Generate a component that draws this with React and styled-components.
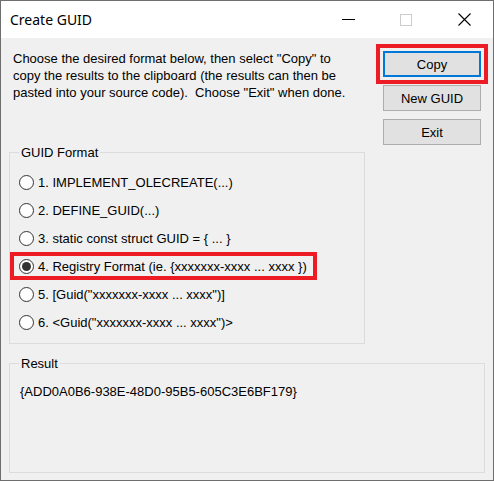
import styled, { createGlobalStyle } from "styled-components";

const GlobalStyle = createGlobalStyle`
  html, body {
    margin: 0;
    padding: 0;
    background: #ffffff;
  }
  body {
    font-family: "Liberation Sans", Arial, sans-serif;
    color: #000;
  }
`;

const Window = styled.div`
  width: 494px;
  height: 481px;
  box-sizing: border-box;
  border: 1px solid #6e6e6e;
  display: flex;
  flex-direction: column;
  background: #f0f0f0;
`;

const TitleBar = styled.div`
  height: 37px;
  flex: none;
  background: #ffffff;
  display: flex;
  align-items: center;
`;

const Title = styled.div`
  flex: 1;
  padding-left: 9px;
  font-family: "Noto Sans", "Open Sans", sans-serif;
  font-size: 14px;
`;

const CaptionButton = styled.div`
  width: 58px;
  height: 37px;
  display: flex;
  align-items: center;
  justify-content: center;
`;

const Client = styled.div`
  flex: 1;
  display: flex;
  flex-direction: column;
  padding: 12px 8px 7px 8px;
  font-size: 13px;
`;

const Top = styled.div`
  display: flex;
  align-items: flex-start;
`;

const LeftColumn = styled.div`
  width: 356px;
  display: flex;
  flex-direction: column;
`;

const Instructions = styled.p`
  margin: 0 0 0 4px;
  max-width: 346px;
  line-height: 17px;
`;

const GroupBox = styled.fieldset`
  margin: ${(p) => p.$top}px 0 0;
  padding: ${(p) => p.$padTop}px 4px ${(p) => p.$padBottom}px;
  border: 1px solid #dcdcdc;
  min-inline-size: 0;
  box-sizing: border-box;
  flex: ${(p) => (p.$grow ? 1 : "none")};
  display: flex;
  flex-direction: column;
  gap: 8px;
`;

const Legend = styled.legend`
  margin-left: 5px;
  padding: 0 2px;
  line-height: 15px;
`;

const Option = styled.label`
  align-self: flex-start;
  height: 20px;
  display: flex;
  align-items: center;
  gap: 4px;
  padding: 0 6px 0 5px;
  outline: ${(p) => (p.$marked ? "4px solid #ed1c24" : "none")};
`;

const Radio = styled.span`
  width: 15px;
  height: 15px;
  box-sizing: border-box;
  border: 1px solid #333333;
  border-radius: 50%;
  background: #ffffff;
  display: flex;
  align-items: center;
  justify-content: center;

  &::after {
    content: "";
    width: 9px;
    height: 9px;
    border-radius: 50%;
    background: #333333;
    display: ${(p) => (p.$checked ? "block" : "none")};
  }
`;

const ButtonColumn = styled.div`
  margin: 1px 4px 0 18px;
  width: 98px;
  display: flex;
  flex-direction: column;
  gap: 8px;
`;

const Button = styled.button`
  height: 26px;
  box-sizing: border-box;
  background: #e1e1e1;
  border: 1px solid ${(p) => (p.$default ? "#0078d7" : "#adadad")};
  box-shadow: ${(p) => (p.$default ? "inset 0 0 0 1px #0078d7" : "none")};
  outline: ${(p) => (p.$marked ? "4px solid #ed1c24" : "none")};
  outline-offset: 3px;
  font-family: inherit;
  font-size: 13px;
  color: #000;
  padding: 0;
`;

const ResultText = styled.div`
  margin-left: 6px;
  line-height: 15px;
`;

const formats = [
  "1. IMPLEMENT_OLECREATE(...)",
  "2. DEFINE_GUID(...)",
  "3. static const struct GUID = { ... }",
  "4. Registry Format (ie. {xxxxxxx-xxxx ... xxxx })",
  '5. [Guid("xxxxxxx-xxxx ... xxxx")]',
  '6. <Guid("xxxxxxx-xxxx ... xxxx")>',
];

export default function App() {
  const selected = 3;

  return (
    <>
      <GlobalStyle />
      <Window>
        <TitleBar>
          <Title>Create GUID</Title>
          <CaptionButton>
            <svg width="13" height="13" viewBox="0 0 13 13">
              <line x1="0" y1="6.5" x2="13" y2="6.5" stroke="#000" strokeWidth="1" />
            </svg>
          </CaptionButton>
          <CaptionButton>
            <svg width="12" height="12" viewBox="0 0 12 12">
              <rect x="0.5" y="0.5" width="11" height="11" fill="none" stroke="#cccccc" strokeWidth="1" />
            </svg>
          </CaptionButton>
          <CaptionButton>
            <svg width="13" height="13" viewBox="0 0 13 13">
              <path d="M0.5 0.5 L12.5 12.5 M12.5 0.5 L0.5 12.5" stroke="#000" strokeWidth="1.1" />
            </svg>
          </CaptionButton>
        </TitleBar>

        <Client>
          <Top>
            <LeftColumn>
              <Instructions>
                Choose the desired format below, then select "Copy" to copy the
                results to the clipboard (the results can then be pasted into
                your source code).&nbsp; Choose "Exit" when done.
              </Instructions>

              <GroupBox $top={44} $padTop={12} $padBottom={11}>
                <Legend>GUID Format</Legend>
                {formats.map((text, i) => (
                  <Option key={text} $marked={i === selected}>
                    <Radio $checked={i === selected} />
                    {text}
                  </Option>
                ))}
              </GroupBox>
            </LeftColumn>

            <ButtonColumn>
              <Button $default $marked>Copy</Button>
              <Button>New GUID</Button>
              <Button>Exit</Button>
            </ButtonColumn>
          </Top>

          <GroupBox $top={12} $padTop={13} $padBottom={0} $grow>
            <Legend>Result</Legend>
            <ResultText>{"{ADD0A0B6-938E-48D0-95B5-605C3E6BF179}"}</ResultText>
          </GroupBox>
        </Client>
      </Window>
    </>
  );
}
